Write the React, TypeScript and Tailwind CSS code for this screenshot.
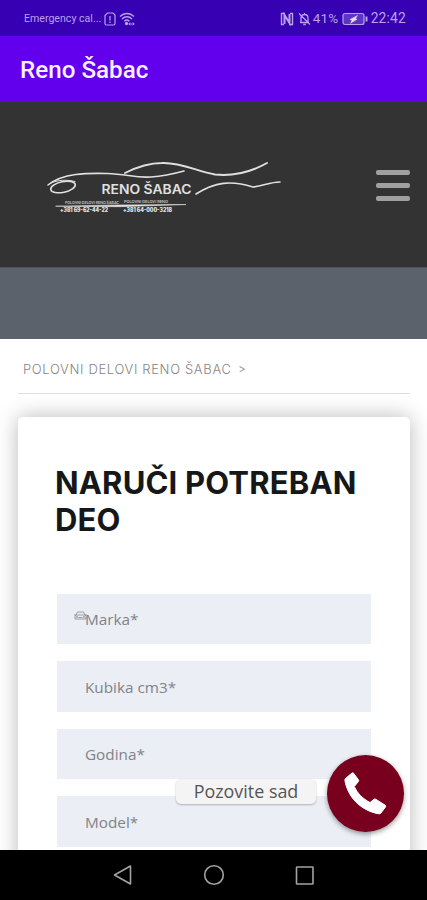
const fields = ["Marka*", "Kubika cm3*", "Godina*", "Model*"];

function StatusBar() {
  return (
    <div className="flex h-9 shrink-0 items-center bg-[#3700b3] pl-6 pr-[21px] pt-px font-[Roboto,sans-serif] text-[#b9a2ea]">
      <span className="w-[77px] whitespace-nowrap text-[10.6px]">Emergency cal...</span>
      <svg className="ml-[3px]" width="12" height="14" viewBox="0 0 12 14" fill="none" stroke="currentColor" strokeWidth="1.2">
        <path d="M3.5 1H9l2 2v8.5c0 1-.5 1.500-1.500 1.500h-7C1.500 13 1 12.500 1 11.500V3.500z" />
        <path d="M6 4v4.500M6 9.500V11" />
      </svg>
      <svg className="ml-[3px]" width="16" height="14" viewBox="0 0 16 14" fill="none" stroke="currentColor" strokeWidth="1.3">
        <path d="M1 4.500c4-4 10-4 14 0M3 7c3-3 7-3 10 0M5.300 9.300c1.500-1.500 3.500-1.500 5 0" />
        <circle cx="7.5" cy="11.5" r="1" fill="currentColor" />
        <path d="M10 12h5M11 10.500 9.800 12l1.200 1.300M14 10.500l1.200 1.500-1.200 1.300" strokeWidth="1" />
      </svg>
      <div className="ml-auto flex items-center">
        <svg width="14" height="14" viewBox="0 0 14 14" fill="none" stroke="currentColor">
          <path d="M5 1.500H1.500v11H4M9 12.500h3.500v-11H10" strokeWidth="1.4" />
          <path d="M4.500 12V3l5 8V2" strokeWidth="2" />
        </svg>
        <svg className="ml-1" width="13" height="14" viewBox="0 0 13 14" fill="none" stroke="currentColor" strokeWidth="1.3">
          <path d="M2 10.500h9M3 10.500V6c0-2 1.500-3.500 3.500-3.500S10 4 10 6v4.500M6.500 1v1.500M5.300 12.500h2.400M1 1.500l11 11" />
        </svg>
        <span className="ml-[2px] w-[28px] whitespace-nowrap text-[13.5px] tracking-[0.2px]">41%</span>
        <svg className="ml-[1px]" width="26" height="14" viewBox="0 0 26 14" fill="none" stroke="currentColor" strokeWidth="1.2">
          <rect x="1" y="1.5" width="21" height="11" rx="2" fill="#5c35c4" />
          <path d="M24.500 4.500v5" strokeWidth="2" />
          <path d="M15.500 3.500 8 7.500l2 .8-1.500 3 6.500-4-1.500-.8z" fill="#e6dcfa" stroke="#e6dcfa" strokeWidth=".5" />
        </svg>
        <span className="ml-[3px] text-[13.8px] tracking-[0.2px]">22:42</span>
      </div>
    </div>
  );
}

function Logo() {
  return (
    <svg width="250" height="70" viewBox="40 150 250 70" fill="none" stroke="#e0e0e0" strokeLinecap="round">
      <path d="M48 185C63 173 87 173 107 173.500C127 174 134 178 151 177C165 176 173 174 184 171" strokeWidth="1.6" />
      <path d="M125 173C139 166 149 163 162 163C181 162 198 172 215 174.500C234 176.500 251 172 267 163" strokeWidth="1.9" />
      <path d="M196 194C215 182 231 180 253 187C263 186 270 182 280 182" strokeWidth="1.6" />
      <ellipse cx="63" cy="187" rx="12.5" ry="5.3" transform="rotate(-12 63 187)" strokeWidth="1.6" />
      <path d="M50 183.500c8-4 17-4 25-2" strokeWidth="1" />
      <path d="M56 206.200 118 205 186 204.500 120 206.700z" fill="#e0e0e0" strokeWidth=".6" />
      <g fill="#e0e0e0" stroke="none" fontFamily="Inter, sans-serif">
        <text x="101.5" y="193.5" fontSize="12.6" fontWeight="600" textLength="90" lengthAdjust="spacingAndGlyphs">RENO ŠABAC</text>
        <g fontSize="3.6" fontWeight="600" opacity=".8">
          <text x="65" y="203.8" textLength="54" lengthAdjust="spacingAndGlyphs">POLOVNI DELOVI RENO ŠABAC</text>
          <text x="124" y="203.4" textLength="44" lengthAdjust="spacingAndGlyphs">POLOVNI DELOVI RENO</text>
        </g>
        <g fontSize="5.5" fontWeight="900">
          <text x="60" y="212" textLength="48" lengthAdjust="spacingAndGlyphs">+381 69-62-44-22</text>
          <text x="123" y="212" textLength="49" lengthAdjust="spacingAndGlyphs">+381 64-000-3218</text>
        </g>
      </g>
    </svg>
  );
}

function CarIcon() {
  return (
    <svg className="absolute left-[17px] top-[17px]" width="13" height="11" viewBox="0 0 13 11" fill="none" stroke="#85888c" strokeWidth=".8">
      <path d="M0 4h2l1.500-3h6L11 4h2M2 4h9l1 1.500V8H1V5.500zM4.500 6.500h4" />
      <circle cx="3" cy="6" r=".6" />
      <circle cx="10" cy="6" r=".6" />
    </svg>
  );
}

function PhoneIcon() {
  return (
    <svg width="43" height="43" viewBox="0 0 43 43" fill="#fff" stroke="#fff" strokeWidth="1" strokeLinejoin="round">
      <path d="M1.500 6.500 8 1Q9 .5 9.700 1.300L14.500 8Q15 8.800 14.400 9.500L10.300 14.500C13.500 21.500 18.500 26.500 26 30.500L30 27.300Q30.800 26.700 31.700 27.200L41.300 33.300Q42.200 34 41.600 34.800L37 41Q36 42.200 34 41.700C16 38 4 25 1 9Q.6 7.300 1.500 6.500z" />
    </svg>
  );
}

export default function App() {
  return (
    <div className="relative flex h-[900px] w-[427px] flex-col overflow-hidden bg-white">
      <StatusBar />
      <div className="flex h-[66px] shrink-0 items-center bg-[#6200ee] pl-[20px] pt-[2px]">
        <h1 className="font-[Roboto,sans-serif] text-[24.2px] font-medium text-[#f5effe]">Reno Šabac</h1>
      </div>
      <header className="flex h-[165px] shrink-0 items-center justify-between bg-[#333] pl-10 pr-[17px]">
        <Logo />
        <button className="flex flex-col gap-[8px] pt-px">
          <span className="h-[5px] w-[34px] rounded-[2px] bg-[#a0a0a0]" />
          <span className="h-[5px] w-[34px] rounded-[2px] bg-[#a0a0a0]" />
          <span className="h-[5px] w-[34px] rounded-[2px] bg-[#a0a0a0]" />
        </button>
      </header>
      <div className="h-[72px] shrink-0 border-t border-[#4c535a] bg-[#5b626b]" />

      <main className="min-h-0 flex-1 overflow-hidden pl-[18px] pr-[17px]">
        <div className="flex h-[54.5px] items-center border-b border-[#dedede] pl-[5px] pt-[7px] font-[Inter,sans-serif] text-[13px] font-light text-[#858585]">
          <span className="w-[209px] whitespace-nowrap tracking-[0.66px]">POLOVNI DELOVI RENO ŠABAC</span>
          <span className="ml-[6px] text-[12px]">&gt;</span>
        </div>
        <div className="mt-[23.5px] h-[500px] rounded-[5px] bg-white px-[39px] pt-[47px] shadow-[0_0_22px_rgba(0,0,0,0.28)]">
          <h2 className="-ml-[2px] whitespace-nowrap font-[Inter,sans-serif] text-[31px] font-bold leading-[37px] tracking-[0.17px] text-[#151719]">
            NARUČI POTREBAN
            <br />
            DEO
          </h2>
          <form className="mt-[55.5px] flex flex-col gap-[17px]">
            {fields.map((name, i) => (
              <div key={name} className="relative flex h-[50.5px] items-center bg-[#ebeef5] pl-[28px] pt-[2px]">
                {i === 0 && <CarIcon />}
                <span className="font-['Open_Sans',sans-serif] text-[15.3px] text-[#808388]">{name}</span>
              </div>
            ))}
          </form>
        </div>
      </main>

      <nav className="flex h-[50px] shrink-0 items-center bg-black pl-[112px]">
        <svg width="204" height="24" viewBox="0 0 204 24" fill="none" stroke="#a3a3a3" strokeWidth="1.6" strokeLinejoin="round">
          <path d="M2.500 12 18.500 3v18z" />
          <circle cx="102" cy="12" r="9.3" />
          <rect x="184.5" y="4" width="16.5" height="17" rx=".5" />
        </svg>
      </nav>

      {/* floating call button, sits above the form */}
      <div className="absolute bottom-[68px] right-[23px] flex items-center gap-[11px]">
        <span className="mb-[4px] flex h-[25px] w-[140px] items-center justify-center rounded-[5px] bg-[#f4f4f4] font-['Open_Sans',sans-serif] text-[17.9px] text-[#555] shadow-[0_1px_2px_rgba(0,0,0,0.25)]">
          Pozovite sad
        </span>
        <button className="flex size-[77px] items-center justify-center rounded-full bg-[#78001e] shadow-[0_2px_5px_rgba(0,0,0,0.4)]">
          <PhoneIcon />
        </button>
      </div>
    </div>
  );
}
